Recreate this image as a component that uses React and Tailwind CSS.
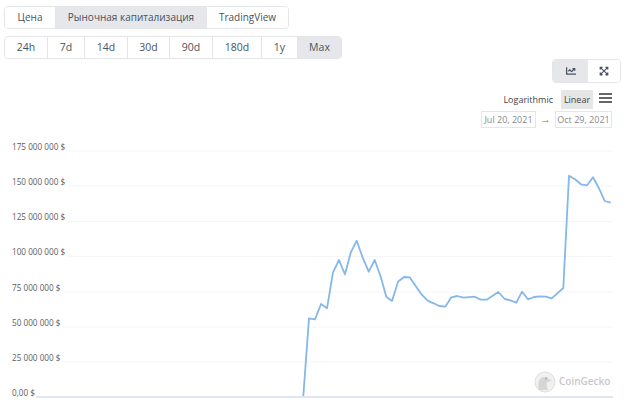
import React from 'react';
import { FaChartLine, FaExpandArrowsAlt } from 'react-icons/fa';

const font = "font-['Open_Sans','Liberation_Sans',sans-serif]";

const tabs = [
  { label: 'Цена', w: 'w-[50px]' },
  { label: 'Рыночная капитализация', w: 'w-[151px]', active: true },
  { label: 'TradingView', w: 'w-[82px]' },
];

const ranges = [
  { label: '24h', w: 'w-[42px]' },
  { label: '7d', w: 'w-[37px]' },
  { label: '14d', w: 'w-[43px]' },
  { label: '30d', w: 'w-[42px]' },
  { label: '90d', w: 'w-[43px]' },
  { label: '180d', w: 'w-[49px]' },
  { label: '1y', w: 'w-[36px]' },
  { label: 'Max', w: 'w-[44px]', active: true },
];

const ticks = [
  ['175 000 000 $', 151, 68],
  ['150 000 000 $', 186, 68],
  ['125 000 000 $', 221.5, 68],
  ['100 000 000 $', 256.5, 68],
  ['75 000 000 $', 292, 62],
  ['50 000 000 $', 327, 62],
  ['25 000 000 $', 362, 62],
  ['0,00 $', 397, 36],
];

// traced from the picture, page coordinates
const line = [
  [303.3, 396], [309, 318.3], [315, 319.3], [321, 304], [327, 308.3], [333, 272.3], [339, 260],
  [345, 274.3], [350.7, 252.7], [356.7, 240.7], [362.7, 257.7], [368.7, 271.7], [374.7, 260], [380.7, 276.7],
  [386.3, 296.7], [392, 301], [398, 281.7], [404, 277], [409.7, 277.3], [415.7, 286], [421.7, 294.7],
  [427.7, 300.7], [433.7, 303.3], [439.3, 306], [445.3, 306.7], [451.3, 297.3], [457.3, 296], [463.3, 297.7],
  [474.7, 296.7], [480.7, 299.7], [486.7, 299.7], [498.3, 292], [504.7, 299], [510.3, 300.3], [516.3, 302.7],
  [522, 291.7], [528, 299.3], [534, 297], [540, 296.3], [545.7, 296.7], [551.7, 298.3], [563.3, 288],
  [569, 175.7], [575, 179.3], [581, 184.3], [587, 185.3], [593, 177.3], [598.7, 187.7], [604.7, 201], [610.7, 202.7],
];

const chartTop = 132;

function Segmented({ items, size }) {
  return (
    <div className="flex h-[23px] w-fit overflow-hidden rounded-[4px] border border-[#e3e5e9]">
      {items.map((item, i) => (
        <div
          key={item.label}
          className={`flex items-center justify-center ${size} text-[#4a5260] ${item.w} ${i > 0 ? 'border-l border-[#e3e5e9]' : ''} ${item.active ? 'bg-[#e5e7eb]' : 'bg-white'}`}
        >
          {item.label}
        </div>
      ))}
    </div>
  );
}

function Chart() {
  return (
    <svg width="628" height="287" viewBox={`0 ${chartTop} 628 287`} className="block">
      {ticks.map(([label, y, start]) => (
        <g key={label}>
          <line
            x1={start}
            x2="613"
            y1={y}
            y2={y}
            stroke={y === 397 ? '#d3dfef' : '#f4f5f7'}
            strokeWidth={y === 397 ? 1.5 : 1}
          />
          <text x="12" y={y - 1.5} fontSize="8.2" fill="#5c5c5c" fontFamily="'Open Sans', sans-serif">
            {label}
          </text>
        </g>
      ))}
      <polyline
        points={line.map((p) => p.join(',')).join(' ')}
        fill="none"
        stroke="#85b8e8"
        strokeWidth="1.8"
        strokeLinejoin="round"
      />
      {/* CoinGecko mark */}
      <circle cx="545" cy="382" r="10" fill="#f1f1f1" stroke="#dedede" strokeWidth="1" />
      <path d="M539 390c-1-5-1-10 2-12 3-2 7-1 8 1l3 2-5 1c-1 2 0 5 1 8z" fill="#d6d6d6" />
      <circle cx="546" cy="378.5" r="1" fill="#aaa" />
      <text x="559" y="385" fontSize="10" fontWeight="600" fill="#c8c8c8" fontFamily="'Open Sans', sans-serif">
        CoinGecko
      </text>
    </svg>
  );
}

export default function App() {
  return (
    <div className={`w-[628px] h-[419px] overflow-hidden bg-white ${font}`}>
      <div className="pl-[4px] pt-[6px] flex flex-col gap-[7px]">
        <Segmented items={tabs} size="text-[10px]" />
        <Segmented items={ranges} size="text-[10.5px]" />
      </div>

      <div className="flex justify-end pr-[7px]">
        <div className="flex h-[24px] w-[69px] overflow-hidden rounded-[4px] border border-[#e3e5e9]">
          <div className="flex w-[35px] items-center justify-center bg-[#e5e7eb] text-[#4a5260]">
            <FaChartLine size={10} />
          </div>
          <div className="flex flex-1 items-center justify-center bg-white text-[#4a5260]">
            <FaExpandArrowsAlt size={10} />
          </div>
        </div>
      </div>

      <div className="mt-[7px] flex h-[19px] items-center justify-end pr-[16px] text-[9px] text-[#444]">
        <span>Logarithmic</span>
        <span className="ml-[8px] flex h-[19px] w-[32px] items-center justify-center bg-[#e6e6e6]">Linear</span>
        <div className="ml-[6px] flex w-[13px] flex-col gap-[2px] pb-[4px]">
          <div className="h-[2px] bg-[#666]" />
          <div className="h-[2px] bg-[#666]" />
          <div className="h-[2px] bg-[#666]" />
        </div>
      </div>

      <div className="mt-[2px] flex h-[17px] items-center justify-end pr-[16px] text-[9px] text-[#888]">
        <span className="flex h-[17px] w-[55px] items-center justify-center border border-[#e6e6e6]">Jul 20, 2021</span>
        <span className="flex w-[19px] justify-center text-[11px] text-[#777] font-['Liberation_Sans',sans-serif]">→</span>
        <span className="flex h-[17px] w-[57px] items-center justify-center border border-[#e6e6e6]">Oct 29, 2021</span>
      </div>

      <div className="mt-[4px]">
        <Chart />
      </div>
    </div>
  );
}
